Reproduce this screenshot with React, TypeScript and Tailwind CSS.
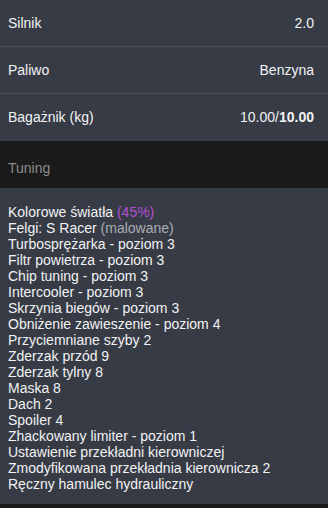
import React from 'react';

const specs = [
  { label: 'Silnik', value: <>2.0</> },
  { label: 'Paliwo', value: <>Benzyna</> },
  {
    label: 'Bagażnik (kg)',
    value: (
      <>
        10.00/<span className="font-bold">10.00</span>
      </>
    ),
  },
];

const tuning = [
  'Turbosprężarka - poziom 3',
  'Filtr powietrza - poziom 3',
  'Chip tuning - poziom 3',
  'Intercooler - poziom 3',
  'Skrzynia biegów - poziom 3',
  'Obniżenie zawieszenie - poziom 4',
  'Przyciemniane szyby 2',
  'Zderzak przód 9',
  'Zderzak tylny 8',
  'Maska 8',
  'Dach 2',
  'Spoiler 4',
  'Zhackowany limiter - poziom 1',
  'Ustawienie przekładni kierowniczej',
  'Zmodyfikowana przekładnia kierownicza 2',
  'Ręczny hamulec hydrauliczny',
];

export default function App() {
  return (
    <div className="w-[328px] h-[508px] bg-[#1b1b1b] text-[14px] text-[#f2f2f2] font-['Liberation_Sans',Arial,sans-serif] overflow-hidden">
      <div className="bg-[#363b46]">
        {specs.map(({ label, value }, i) => (
          <div
            key={label}
            className={`flex items-center justify-between pl-2 pr-[14px] h-[47px] ${
              i < specs.length - 1 ? 'border-b border-[#4b505b]' : ''
            }`}
          >
            <span>{label}</span>
            <span>{value}</span>
          </div>
        ))}
      </div>

      {/* Tuning header */}
      <div className="h-[47px] flex items-end px-2 pb-[9px] bg-[#1b1b1b] text-[#8c8c8c]">
        Tuning
      </div>

      <div className="bg-[#363b46] px-2 pt-[16px] pb-[12px] leading-[16px]">
        <div>
          Kolorowe światła <span className="text-[#b44fd4]">(45%)</span>
        </div>
        <div>
          Felgi: S Racer <span className="text-[#a9acb3]">(malowane)</span>
        </div>
        {tuning.map((t) => (
          <div key={t}>{t}</div>
        ))}
      </div>
    </div>
  );
}
